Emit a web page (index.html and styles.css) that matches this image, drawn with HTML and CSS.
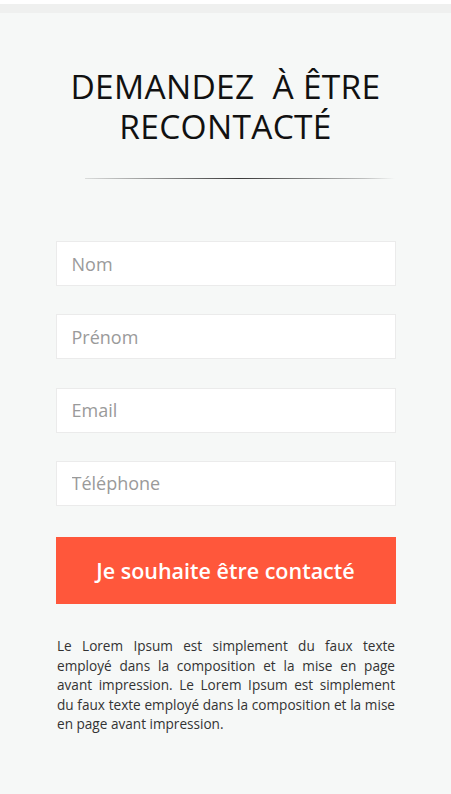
FILE: index.html
```html
<!DOCTYPE html>
<html lang="fr">
<head>
<meta charset="utf-8">
<link rel="stylesheet" href="styles.css">
</head>
<body>
<div class="topbar"></div>
<main class="section">
  <h1 class="title">DEMANDEZ&nbsp; À ÊTRE<br>RECONTACTÉ</h1>
  <div class="divider"></div>
  <form class="form">
    <input class="field" type="text" placeholder="Nom">
    <input class="field" type="text" placeholder="Prénom">
    <input class="field" type="email" placeholder="Email">
    <input class="field" type="tel" placeholder="Téléphone">
    <button class="submit" type="button">Je souhaite être contacté</button>
  </form>
  <p class="note">Le Lorem Ipsum est simplement du faux texte employé dans la composition et la mise en page avant impression. Le Lorem Ipsum est simplement du faux texte employé dans la composition et la mise en page avant impression.</p>
</main>
</body>
</html>
```
FILE: styles.css
```css
* { box-sizing: border-box; }
html, body {
  margin: 0;
  padding: 0;
  background: #ffffff;
  font-family: "Open Sans", "Noto Sans", sans-serif;
}
.topbar {
  margin-top: 4px;
  height: 9px;
  background: #eff0ef;
}
.section {
  background: #f6f8f7;
  min-height: 781px;
  padding-top: 53px;
  display: flex;
  flex-direction: column;
  align-items: center;
}
.title {
  margin: 0;
  font-weight: 400;
  font-size: 33.5px;
  line-height: 40px;
  color: #111;
  text-align: center;
  letter-spacing: 0.3px;
}
.divider {
  align-self: flex-start;
  margin: 32px 0 0 85px;
  width: 310px;
  height: 1px;
  background: linear-gradient(to right, rgba(60,60,60,0.15), #3a3a3a 50%, rgba(60,60,60,0.3) 90%, rgba(60,60,60,0));
}
.form {
  width: 340px;
  margin-top: 62px;
  display: flex;
  flex-direction: column;
}
.field {
  height: 45px;
  border: 1px solid #ebebeb;
  background: #fff;
  padding: 0 15px;
  font-family: inherit;
  font-size: 18px;
  color: #333;
  margin-bottom: 28.3px;
  outline: none;
}
.field::placeholder { color: #9a9a9a; }
.submit {
  margin-top: 3px;
  height: 67px;
  border: 0;
  background: #ff573b;
  color: #fff;
  font-family: inherit;
  font-size: 21.5px;
  font-weight: 600;
  cursor: pointer;
}
.note {
  width: 338px;
  margin: 32px 0 0 1px;
  font-size: 13.6px;
  line-height: 19.5px;
  color: #333;
  text-align: justify;
}
```
